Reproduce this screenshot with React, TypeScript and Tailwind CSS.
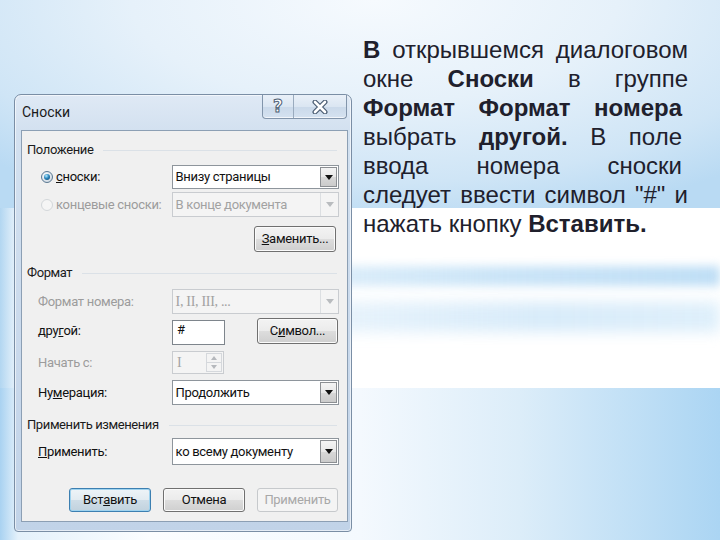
import React from "react";

const SANS = "font-['Liberation_Sans',Arial,sans-serif]";
const UI = "font-['Roboto','Liberation_Sans',Arial,sans-serif]";

function Heading({ children, className = "" }: { children: React.ReactNode; className?: string }) {
  return (
    <div className={`flex items-center h-[16px] ${className}`}>
      <span className="text-[13px] tracking-[-0.4px] leading-[16px] text-[#1b1b1b] whitespace-nowrap">{children}</span>
      <div className="flex-1 h-px bg-[#dbe1e7] ml-[10px] mr-[2px]" />
    </div>
  );
}

function Arrow({ disabled }: { disabled?: boolean }) {
  return (
    <svg width="8" height="5" viewBox="0 0 8 5">
      <path d="M0 0H8L4 5Z" fill={disabled ? "#b9bcbf" : "#111"} />
    </svg>
  );
}

function Select({
  value,
  disabled,
  serif,
  className = "",
}: {
  value: string;
  disabled?: boolean;
  serif?: boolean;
  className?: string;
}) {
  return (
    <div
      className={`flex w-[168px] border ${
        disabled ? "border-[#c9ccd0] bg-[#f4f4f4]" : "border-[#8e959c] bg-white"
      } ${className}`}
    >
      <div
        className={`flex-1 flex items-center pl-[3px] ${
          disabled ? "text-[#a2a2a2]" : "text-[#111]"
        } ${serif ? "font-['Liberation_Serif',serif] text-[14px]" : "text-[13px] tracking-[-0.3px]"}`}
      >
        {value}
      </div>
      {disabled ? (
        <div className="w-[18px] flex items-center justify-center border-l border-[#dcdfe2] bg-[#f4f4f4]">
          <Arrow disabled />
        </div>
      ) : (
        <div className="w-[17px] m-px flex items-center justify-center border border-[#8c8f93] bg-[linear-gradient(to_bottom,#f4f4f4_0%,#e8e8e8_50%,#d8d8d8_51%,#cbcbcb_100%)]">
          <Arrow />
        </div>
      )}
    </div>
  );
}

function Radio({ checked }: { checked?: boolean }) {
  if (checked)
    return (
      <div className="w-[12px] h-[12px] rounded-full border border-[#5a7892] bg-[radial-gradient(circle_at_40%_35%,#ffffff,#c2cfdb)] flex items-center justify-center">
        <div className="w-[6px] h-[6px] rounded-full bg-[radial-gradient(circle_at_38%_32%,#b7ecff_0%,#2a86bd_45%,#0c3f66_100%)]" />
      </div>
    );
  return <div className="w-[12px] h-[12px] rounded-full border border-[#d3d7da] bg-[#f5f5f5]" />;
}

function Btn({
  children,
  className = "",
  def,
  disabled,
}: {
  children: React.ReactNode;
  className?: string;
  def?: boolean;
  disabled?: boolean;
}) {
  const base = disabled
    ? "border-[#c6c9cc] bg-[#f4f4f4] text-[#a8a8a8]"
    : def
    ? "border-[#3c7fb1] bg-[linear-gradient(to_bottom,#eef4f8_0%,#e2ebf1_50%,#cfdde7_51%,#c1d2de_100%)] text-[#111] shadow-[inset_0_0_0_1px_#9fd3ef]"
    : "border-[#707070] bg-[linear-gradient(to_bottom,#f3f3f3_0%,#ebebeb_50%,#dddddd_51%,#cfcfcf_100%)] text-[#111] shadow-[inset_0_0_0_1px_#fbfbfb]";
  return (
    <div className={`flex items-center justify-center rounded-[3px] border text-[13px] tracking-[-0.3px] ${base} ${className}`}>
      {children}
    </div>
  );
}

function Dialog() {
  return (
    <div className={`ml-[14px] mt-[94px] w-[338px] h-[438px] flex flex-col rounded-t-[7px] rounded-b-[4px] border border-[#7a8ea5] bg-[linear-gradient(to_bottom,#dfe9f5_0%,#d3e1f0_8%,#c9d9ec_60%,#c1d3e8_100%)] shadow-[inset_0_0_0_1px_rgba(255,255,255,0.6)] ${UI}`}>
      {/* title bar */}
      <div className="h-[35px] flex items-start">
        <div className="mt-[9px] ml-[7px] text-[14px] leading-[16px] text-[#1a1a1a]">Сноски</div>
        <div className="ml-auto mr-[4px] flex h-[24px] rounded-b-[4px] border border-t-0 border-[#8295ab] bg-[linear-gradient(to_bottom,#e9f0f8_0%,#dbe6f2_50%,#cad9ea_51%,#d5e2f0_100%)] shadow-[inset_0_-1px_0_rgba(255,255,255,0.7)]">
          <div className="w-[31px] flex items-center justify-center border-r border-[#9aabbe]">
            <span className="text-[17px] font-bold text-white leading-none [-webkit-text-stroke:1px_#4c5e74] font-['DejaVu_Sans',sans-serif]">?</span>
          </div>
          <div className="w-[52px] flex items-center justify-center">
            <svg width="16" height="14" viewBox="0 0 16 14">
              <path d="M3 2L13 12M13 2L3 12" stroke="#4c5e74" strokeWidth="5" strokeLinecap="round" />
              <path d="M3 2L13 12M13 2L3 12" stroke="#ffffff" strokeWidth="2.6" strokeLinecap="round" />
            </svg>
          </div>
        </div>
      </div>

      {/* client panel */}
      <div className="ml-[6px] w-[327px] h-[392px] border border-[#8c9fb4] bg-[#f0f0f0] pl-[5px] pr-[8px] flex flex-col text-[13px] tracking-[-0.3px] text-[#111]">
        <Heading className="mt-[11px]">Положение</Heading>

        <div className="mt-[7px] flex items-center h-[24px]">
          <div className="w-[145px] flex items-center pl-[14px]">
            <Radio checked />
            <span className="ml-[3px]">
              <span className="underline">с</span>носки:
            </span>
          </div>
          <Select value="Внизу страницы" className="h-[24px]" />
        </div>

        <div className="mt-[3px] flex items-center h-[25px]">
          <div className="w-[145px] flex items-center pl-[14px] text-[#9c9c9c]">
            <Radio />
            <span className="ml-[3px]">концевые сноски:</span>
          </div>
          <Select value="В конце документа" disabled className="h-[25px]" />
        </div>

        <div className="mt-[9px] flex justify-end">
          <Btn className="w-[82px] h-[26px] mr-[3px]">
            <span>
              <span className="underline">З</span>аменить...
            </span>
          </Btn>
        </div>

        <Heading className="mt-[13px]">Формат</Heading>

        <div className="mt-[8px] flex items-center h-[25px]">
          <div className="w-[145px] pl-[11px] text-[#9c9c9c]">Формат номера:</div>
          <Select value="I, II, III, ..." disabled serif className="h-[25px]" />
        </div>

        <div className="mt-[4px] flex items-center h-[26px]">
          <div className="w-[145px] pl-[11px]">
            дру<span className="underline">г</span>ой:
          </div>
          <div className="w-[53px] h-[25px] mt-[2px] border border-[#7e858c] bg-white pl-[4px] pt-[1px] text-[13px] leading-[16px]">
            #
          </div>
          <Btn className="ml-auto mr-[1px] w-[81px] h-[26px]">
            <span>
              С<span className="underline">и</span>мвол...
            </span>
          </Btn>
        </div>

        <div className="mt-[7px] flex items-center h-[23px]">
          <div className="w-[145px] pl-[11px] text-[#9c9c9c]">Начать с:</div>
          <div className="w-[52px] h-[23px] flex border border-[#c9ccd0] bg-[#f4f4f4]">
            <div className="flex-1 pl-[4px] flex items-center font-['Liberation_Serif',serif] text-[14px] text-[#a5a5a5]">I</div>
            <div className="w-[16px] my-px mr-px flex flex-col">
              <div className="flex-1 border border-[#d5d8dc] flex items-center justify-center">
                <svg width="6" height="4" viewBox="0 0 6 4">
                  <path d="M0 4H6L3 0Z" fill="#b5b8bc" />
                </svg>
              </div>
              <div className="flex-1 border border-t-0 border-[#d5d8dc] flex items-center justify-center">
                <svg width="6" height="4" viewBox="0 0 6 4">
                  <path d="M0 0H6L3 4Z" fill="#b5b8bc" />
                </svg>
              </div>
            </div>
          </div>
        </div>

        <div className="mt-[6px] flex items-center h-[25px]">
          <div className="w-[145px] pl-[11px]">
            Ну<span className="underline">м</span>ерация:
          </div>
          <Select value="Продолжить" className="h-[25px]" />
        </div>

        <Heading className="mt-[12px]">Применить изменения</Heading>

        <div className="mt-[5px] flex items-center h-[27px]">
          <div className="w-[145px] pl-[11px]">
            <span className="underline">П</span>рименить:
          </div>
          <Select value="ко всему документу" className="h-[27px]" />
        </div>

        <div className="mt-[23px] flex items-center justify-end gap-[12px] pr-px">
          <Btn def className="w-[82px] h-[24px]">
            <span>
              Вст<span className="underline">а</span>вить
            </span>
          </Btn>
          <Btn className="w-[82px] h-[24px]">Отмена</Btn>
          <Btn disabled className="w-[81px] h-[24px]">
            Применить
          </Btn>
        </div>
      </div>
    </div>
  );
}

function Line({ children, last, pr }: { children: React.ReactNode; last?: boolean; pr?: boolean }) {
  return (
    <div
      className={`whitespace-nowrap ${last ? "text-left" : "text-justify [text-align-last:justify]"} ${
        pr ? "pr-[6px]" : ""
      }`}
    >
      {children}
    </div>
  );
}

export default function App() {
  return (
    <div className={`relative w-[720px] h-[540px] overflow-hidden ${SANS}`}>
      {/* decorative slide background */}
      <div className="absolute inset-0 flex flex-col">
        <div className="h-[208px] bg-[radial-gradient(ellipse_75%_110%_at_52%_0%,#f6fafe_0%,#e6f1fa_45%,#cfe5f6_80%,#b9daf3_100%)]" />
        <div className="h-[180px] flex flex-col overflow-hidden bg-[linear-gradient(to_right,#b2d6f1_0px,#e7f2fb_16px,#ffffff_40px)]">
          <div className="mt-[58px] h-[20px] blur-[5px] bg-[linear-gradient(to_right,rgba(255,255,255,0)_5%,rgba(195,225,246,0.45)_35%,rgba(180,217,244,0.7)_70%,rgba(175,214,243,0.8)_100%)]" />
          <div className="mt-[16px] h-[30px] blur-[7px] bg-[linear-gradient(to_right,rgba(255,255,255,0)_8%,rgba(205,230,248,0.4)_40%,rgba(190,222,246,0.6)_75%,rgba(195,226,247,0.55)_100%)]" />
        </div>
        <div className="flex-1 bg-[linear-gradient(to_right,#a9d2f1_0px,#e4f1fb_18px,#fbfdff_150px,#f4f9fe_360px,#dcedf9_520px,#abd5f3_720px)]" />
      </div>

      <div className="relative flex items-start">
        <Dialog />
        <div className="ml-[11px] mt-[35px] w-[325px] text-[24px] leading-[29px] text-[#20202c]">
          <Line>
            <b>В</b> открывшемся диалоговом
          </Line>
          <Line>
            окне <b>Сноски</b> в группе
          </Line>
          <Line pr>
            <b>Формат Формат номера</b>
          </Line>
          <Line pr>
            выбрать <b>другой.</b> В поле
          </Line>
          <Line pr>ввода номера сноски</Line>
          <Line>следует ввести символ "#" и</Line>
          <Line last>
            нажать кнопку <b>Вставить.</b>
          </Line>
        </div>
      </div>
    </div>
  );
}
